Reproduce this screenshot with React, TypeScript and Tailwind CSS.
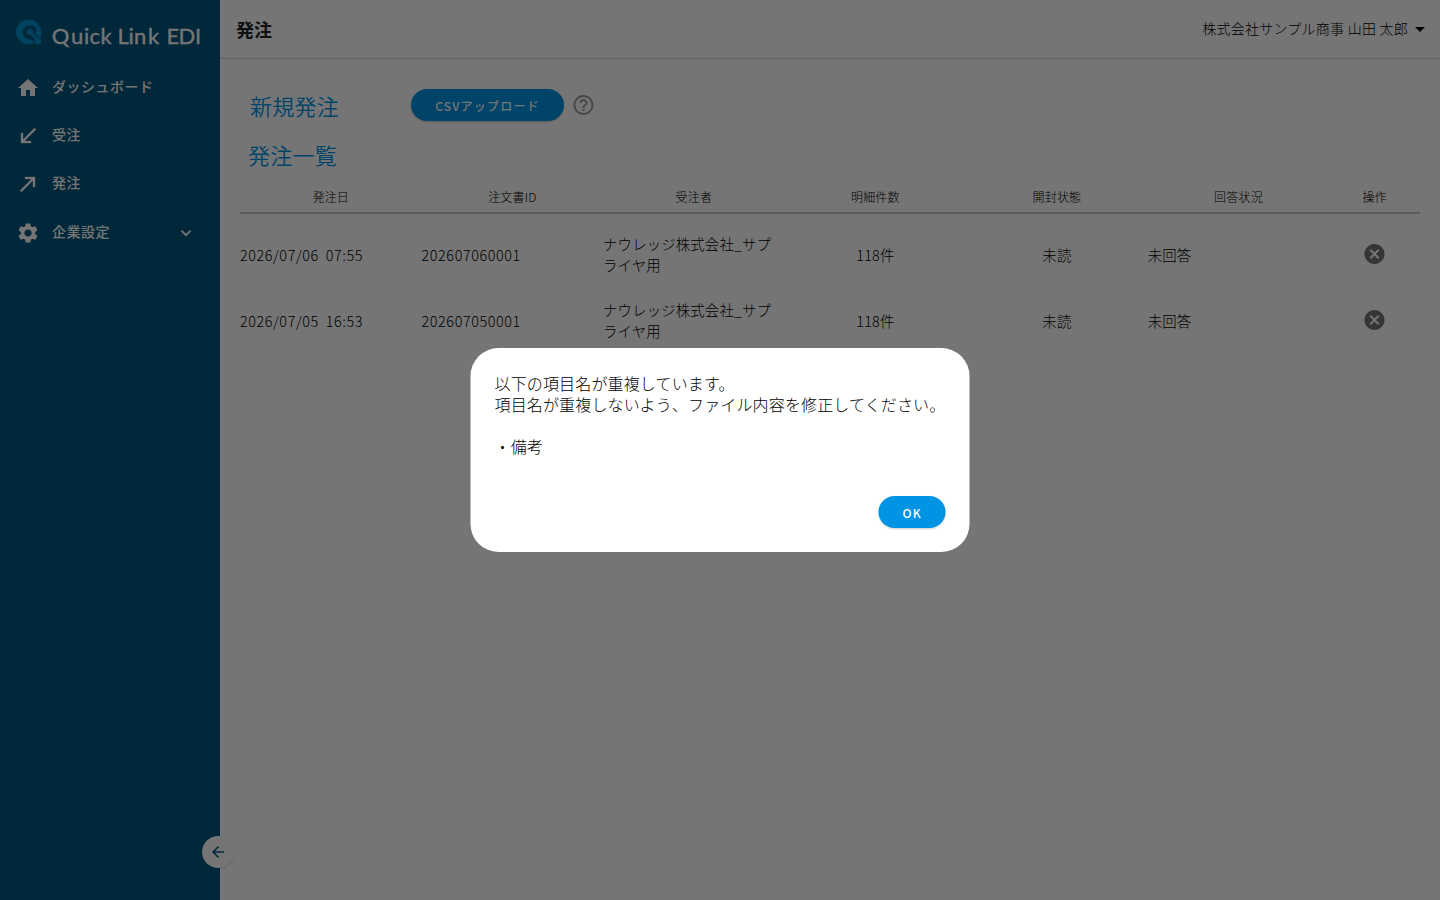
import type { ReactNode } from 'react';
import {
  MdArrowBack,
  MdArrowDropDown,
  MdCallMade,
  MdCallReceived,
  MdCancel,
  MdExpandMore,
  MdHelpOutline,
  MdHome,
  MdSettings,
} from 'react-icons/md';

interface Order {
  date: string;
  time: string;
  id: string;
  receiver: string;
  count: number;
  opened: string;
  answer: string;
}

const orders: Order[] = [
  {
    date: '2026/07/06',
    time: '07:55',
    id: '202607060001',
    receiver: 'ナウレッジ株式会社_サプライヤ用',
    count: 118,
    opened: '未読',
    answer: '未回答',
  },
  {
    date: '2026/07/05',
    time: '16:53',
    id: '202607050001',
    receiver: 'ナウレッジ株式会社_サプライヤ用',
    count: 118,
    opened: '未読',
    answer: '未回答',
  },
];

const headers = ['発注日', '注文書ID', '受注者', '明細件数', '開封状態', '回答状況', '操作'];

function Logo() {
  return (
    <div className="flex h-16 items-start pl-4 pt-[19px]">
      <svg width="26" height="26" viewBox="0 0 26 26">
        <circle cx="12.5" cy="13" r="12.5" fill="#0092d2" />
        <circle cx="14" cy="13.5" r="7.2" fill="#00577e" />
        <path d="M15 14.5L27 26.5" stroke="#00577e" strokeWidth="8" />
        <path d="M20.5 11.5l5 .5-.6 5.500-2 1.200-3.900-4.200z" fill="#0092d2" />
        <circle cx="14" cy="12.8" r="3.1" fill="#0092d2" />
        <path d="M14.5 13.500l7.500 8" stroke="#0092d2" strokeWidth="2.600" />
        <circle cx="22" cy="22.2" r="3.3" fill="#0092d2" />
      </svg>
      <svg className="ml-2 overflow-visible" width="156" height="36" viewBox="0 0 156 36">
        <text
          x="1.7 21 34 39.5 50.500 60 67.5 78.500 84 98 108 116.500 128.5 145"
          y="25"
          fill="#ffffff"
          stroke="#ffffff"
          strokeWidth="0.3"
          className="font-['Lato',sans-serif] text-[22px] font-normal leading-none"
        >
          Quick Link EDI
        </text>
      </svg>
    </div>
  );
}

function NavItem({ icon, label, children }: { icon: ReactNode; label: string; children?: ReactNode }) {
  return (
    <li className="flex h-12 items-center pl-4 pr-6 text-white [&_path[fill=none]]:stroke-none">
      <span className="w-9">{icon}</span>
      <span className="flex-1 pb-[3px] text-[14px] font-medium tracking-[0.5px]">{label}</span>
      {children}
    </li>
  );
}

function Sidebar() {
  return (
    <aside className="relative w-[220px] shrink-0 bg-[#00577e]">
      <Logo />
      <ul>
        <NavItem icon={<MdHome size={24} />} label="ダッシュボード" />
        <NavItem icon={<MdCallReceived size={24} stroke="currentColor" strokeWidth={0.3} />} label="受注" />
        <NavItem icon={<MdCallMade size={24} stroke="currentColor" strokeWidth={0.3} />} label="発注" />
        <li className="pt-px">
          <ul>
            <NavItem icon={<MdSettings size={24} />} label="企業設定">
              <MdExpandMore size={20} stroke="currentColor" strokeWidth={0.5} />
            </NavItem>
          </ul>
        </li>
      </ul>
      <button className="absolute bottom-8 left-[202px] flex h-8 w-8 items-center justify-center rounded-full bg-white text-[#00577e] shadow-[0_1px_2px_rgba(0,0,0,0.15)]">
        <MdArrowBack size={18} />
      </button>
    </aside>
  );
}

function OrderTable() {
  return (
    <div className="mx-5">
      <div className="grid h-[31px] grid-cols-[repeat(6,2fr)_1fr] items-center border-b-2 border-[#c8c8c8] pb-0.5 text-center text-[12px] leading-[18px] tracking-[0.2px]">
        {headers.map((header) => (
          <span key={header}>{header}</span>
        ))}
      </div>
      <div className="pt-2">
        {orders.map((order) => (
          <div
            key={order.id}
            className="grid h-[66px] grid-cols-[repeat(6,2fr)_1fr] items-center text-[14.4px] leading-[21px] tracking-[0.15px]"
          >
            <span className="pb-0.5 tracking-[0.58px]">
              {order.date}
              <span className="ml-[7px]">{order.time}</span>
            </span>
            <span className="pb-0.5 tracking-[0.58px]">{order.id}</span>
            <span className="pb-0.5 pr-3">{order.receiver}</span>
            <span className="pb-0.5 text-center">{order.count}件</span>
            <span className="pb-0.5 text-center">{order.opened}</span>
            <span className="pb-0.5">{order.answer}</span>
            <span className="flex justify-center pb-0.5 pr-px text-[#757575]">
              <MdCancel size={24} className="translate-x-[0.5px]" />
            </span>
          </div>
        ))}
      </div>
    </div>
  );
}

function DuplicateDialog() {
  return (
    <div className="fixed inset-0 flex items-center justify-center bg-black/54">
      <div
        role="dialog"
        className="flex h-[204px] w-[499px] -translate-x-[0.5px] flex-col rounded-[28px] bg-white p-6"
      >
        <div className="whitespace-pre pl-[0.5px] pt-px text-[16px] leading-[21px] tracking-[0.15px]">
          {'以下の項目名が重複しています。\n項目名が重複しないよう、ファイル内容を修正してください。\n\n・備考'}
        </div>
        <button className="mt-auto flex h-8 w-[67px] items-center justify-center self-end rounded-full bg-[#0094e4] pl-[1.5px] pt-0.5 text-[12px] font-medium tracking-[1.2px] text-white shadow-[0_1px_2px_rgba(0,0,0,0.2)]">
          OK
        </button>
      </div>
    </div>
  );
}

export default function App() {
  return (
    <div className="flex h-screen overflow-hidden bg-white font-['Noto_Sans_CJK_JP',sans-serif] font-light text-black">
      <Sidebar />
      <main className="min-w-0 flex-1">
        <header className="flex h-[59px] items-center justify-between border-b border-[#d8d8d8] pl-4 pr-2">
          <h1 className="text-[18px] font-bold text-[#212121]">発注</h1>
          <div className="flex items-center text-[14px] tracking-[0.25px]">
            <span className="pb-0.5">株式会社サンプル商事 山田 太郎</span>
            <MdArrowDropDown size={24} />
          </div>
        </header>
        <section className="flex h-[70px] items-start pl-[30px] pt-[30px] text-[#0094e4]">
          <h2 className="w-[161px] text-[22px] font-[350] leading-8 tracking-[0.25px]">新規発注</h2>
          <button className="flex h-8 w-[153px] items-center justify-center rounded-full bg-[#0094e4] pt-0.5 text-[12px] font-medium tracking-[1.2px] text-white shadow-[0_1px_2px_rgba(0,0,0,0.2)]">
            CSVアップロード
          </button>
          <MdHelpOutline size={24} className="ml-[7px] mt-1 translate-x-[0.5px] text-[#9e9e9e]" />
        </section>
        <h2 className="h-[54px] pl-7 pt-[9px] text-[22px] font-[350] leading-8 tracking-[0.25px] text-[#0094e4]">
          発注一覧
        </h2>
        <OrderTable />
      </main>
      <DuplicateDialog />
    </div>
  );
}
